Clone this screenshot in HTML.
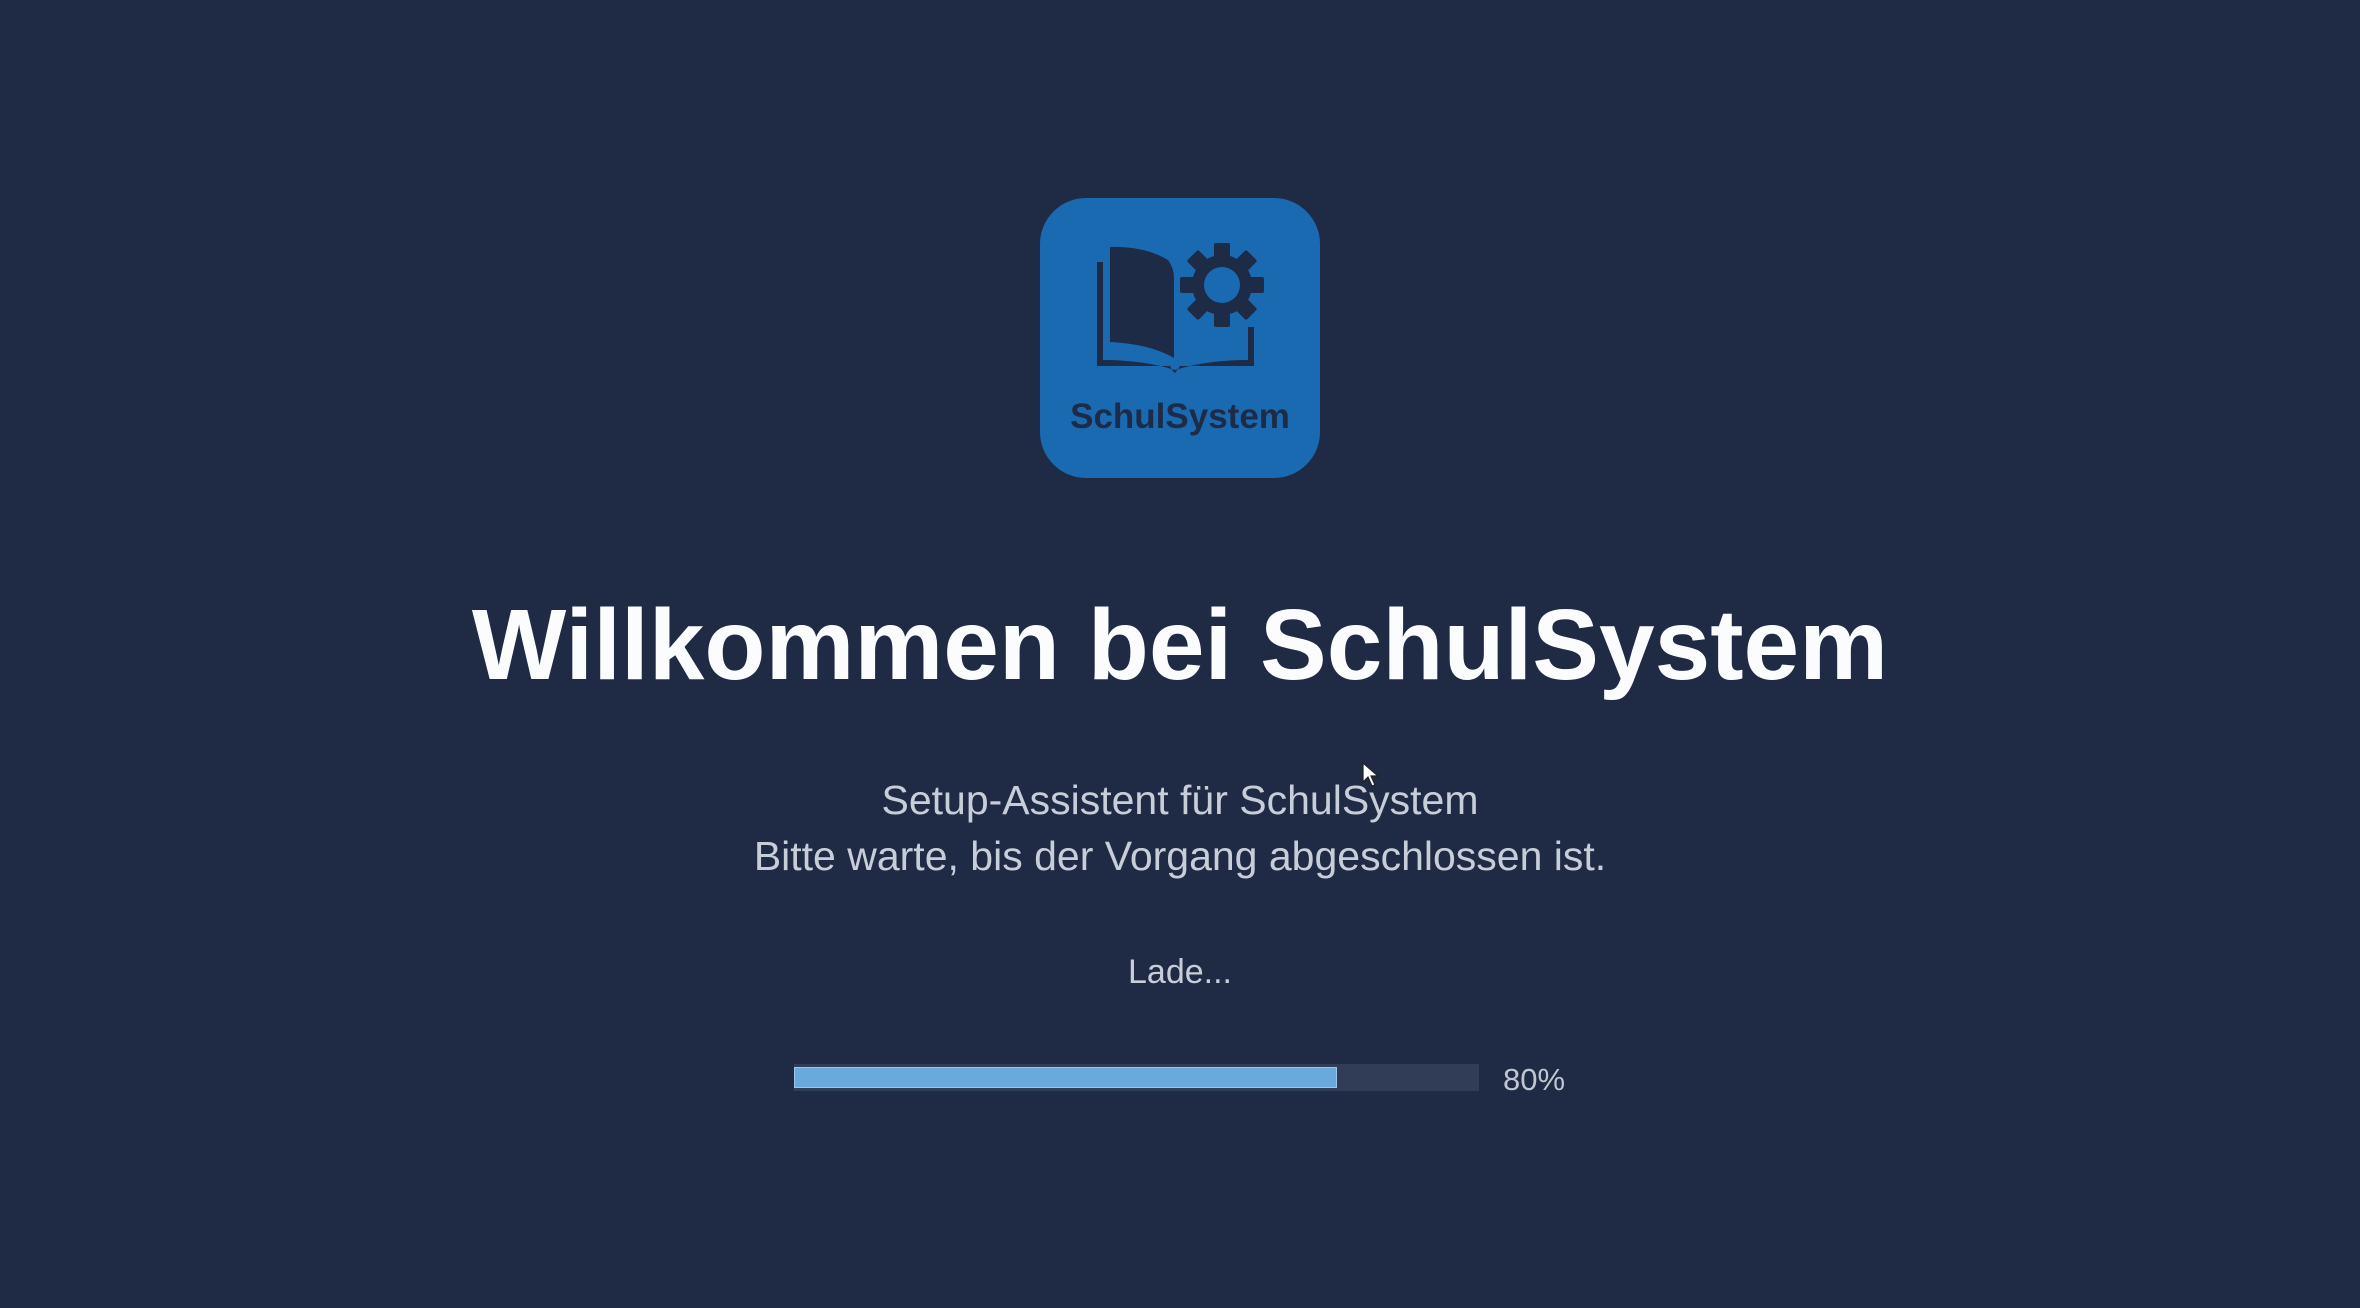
<!DOCTYPE html>
<html><head><meta charset="utf-8"><style>
html,body{margin:0;padding:0;}
body{width:2360px;height:1308px;background:#1f2a44;position:relative;overflow:hidden;font-family:"Liberation Sans",sans-serif;}
.t{position:absolute;left:0;width:2360px;text-align:center;white-space:nowrap;}
</style></head><body>
<svg style="position:absolute;left:1040px;top:198px" width="280" height="280" viewBox="0 0 280 280">
<rect x="0" y="0" width="280" height="280" rx="46" fill="#1a6ab2"/>
<g fill="#1d2b47" stroke="none">
<path d="M70 49 Q105 48 128 62 Q134 70 134 80 L134 160 Q110 146 70 144 Z"/>
<path d="M57 64 h6 v98 q40 0 72 10 q32 -10 73 -10 v-33 h6 v39 h-74 q-4 6 -5 7 q-2 -1 -5 -7 h-73 Z"/>
<text x="140" y="230" text-anchor="middle" font-family="Liberation Sans, sans-serif" font-weight="bold" font-size="35" fill="#1d2b47">SchulSystem</text>
</g>
<g transform="translate(182,87)" fill="#1d2b47">
<circle r="30"/>
<g id="tt"><rect x="-8" y="-42" width="16" height="18" rx="2"/></g>
<use href="#tt" transform="rotate(45)"/><use href="#tt" transform="rotate(90)"/><use href="#tt" transform="rotate(135)"/>
<use href="#tt" transform="rotate(180)"/><use href="#tt" transform="rotate(225)"/><use href="#tt" transform="rotate(270)"/><use href="#tt" transform="rotate(315)"/>
<circle r="18" fill="#1a6ab2"/>
</g>
</svg>
<div class="t" style="top:585px;font-size:100px;font-weight:bold;color:#fbfcfd;line-height:120px;">Willkommen bei SchulSystem</div>
<div class="t" style="top:772px;font-size:41px;color:#c8ced8;line-height:56px;">Setup-Assistent für SchulSystem<br>Bitte warte, bis der Vorgang abgeschlossen ist.</div>
<div class="t" style="top:952px;font-size:34px;color:#c8ced8;line-height:40px;">Lade...</div>
<div style="position:absolute;left:794px;top:1064px;width:685px;height:27px;background:#313d57;"></div>
<div style="position:absolute;left:794px;top:1067px;width:543px;height:21px;background:#6aa9dc;border:1px solid #9cc6ea;box-sizing:border-box;"></div>
<div style="position:absolute;left:1503px;top:1062px;font-size:31px;color:#c0c6d0;line-height:36px;">80%</div>
<svg style="position:absolute;left:1362px;top:762px" width="20" height="28" viewBox="0 0 20 28">
<path d="M1 1 L1 20 L6 15 L10 24 L13 23 L9 14 L16 14 Z" fill="#fff" stroke="#222" stroke-width="1.2"/>
</svg>
</body></html>
